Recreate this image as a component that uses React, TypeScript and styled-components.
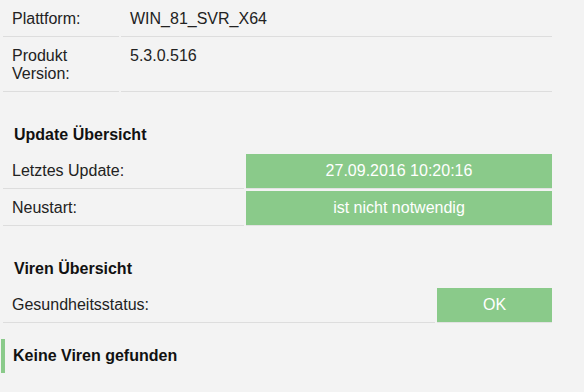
import styled, { createGlobalStyle } from 'styled-components';

const GlobalStyle = createGlobalStyle`
  html, body {
    margin: 0;
    padding: 0;
    background: #f3f3f3;
  }
  body {
    font-family: "Liberation Sans", Arial, sans-serif;
    font-size: 16px;
    color: #222;
  }
`;

const Page = styled.div`
  width: 553px;
  margin-left: 1px;
`;

const InfoTable = styled.table`
  width: 100%;
  table-layout: fixed;
  border-collapse: separate;
  border-spacing: 2px;
`;

const LabelCell = styled.td<{ $width: number }>`
  width: ${props => props.$width}px;
  padding: 8px 8px 8px 9px;
  line-height: 18px;
  vertical-align: top;
  border-bottom: 1px solid #dddddd;
  box-sizing: border-box;
`;

const ValueCell = styled.td`
  padding: 8px 9px;
  line-height: 18px;
  vertical-align: top;
  border-bottom: 1px solid #dddddd;
`;

const StatusCell = styled.td`
  padding: 8px;
  line-height: 18px;
  text-align: center;
  color: #ffffff;
  background: #8aca8a;
  border-bottom: 1px solid #e2e2e2;
`;

const SectionTitle = styled.div`
  padding: 32px 0 8px 13px;
  font-weight: bold;
  line-height: 18px;
  color: #111;
`;

const Notice = styled.div`
  margin-top: 14px;
  border-left: 4px solid #8aca8a;
  padding: 8px;
  line-height: 18px;
  font-weight: bold;
  color: #111;
`;

export default function App() {
  return (
    <Page>
      <GlobalStyle />
      <InfoTable>
        <tbody>
          <tr>
            <LabelCell $width={116}>Plattform:</LabelCell>
            <ValueCell>WIN_81_SVR_X64</ValueCell>
          </tr>
          <tr>
            <LabelCell $width={116}>Produkt Version:</LabelCell>
            <ValueCell>5.3.0.516</ValueCell>
          </tr>
        </tbody>
      </InfoTable>

      <SectionTitle>Update Übersicht</SectionTitle>
      <InfoTable>
        <tbody>
          <tr>
            <LabelCell $width={241}>Letztes Update:</LabelCell>
            <StatusCell>27.09.2016 10:20:16</StatusCell>
          </tr>
          <tr>
            <LabelCell $width={241}>Neustart:</LabelCell>
            <StatusCell>ist nicht notwendig</StatusCell>
          </tr>
        </tbody>
      </InfoTable>

      <SectionTitle>Viren Übersicht</SectionTitle>
      <InfoTable>
        <tbody>
          <tr>
            <LabelCell $width={432}>Gesundheitsstatus:</LabelCell>
            <StatusCell>OK</StatusCell>
          </tr>
        </tbody>
      </InfoTable>

      <Notice>Keine Viren gefunden</Notice>
    </Page>
  );
}
